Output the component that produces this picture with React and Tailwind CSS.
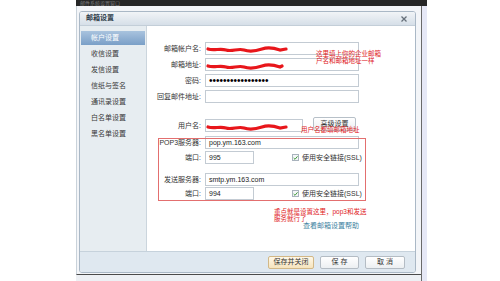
import React from 'react';

const font = { fontFamily: '"Liberation Sans", "Noto Sans CJK SC", sans-serif' };

const menu = ['帐户设置', '收信设置', '发信设置', '信纸与签名', '通讯录设置', '白名单设置', '黑名单设置'];

// red redaction scribble drawn over a field
function Scribble({ w = 80, top = 3 }) {
  return (
    <svg className="absolute left-0 pointer-events-none" style={{ top }} width={w + 4} height="8" viewBox={`0 0 ${w + 4} 8`}>
      <path
        d={`M2 4 C8 6 14 3 20 5 S32 3 38 5 S50 6 56 4 S68 3 74 5 L${w} 4`}
        stroke="#e8161b"
        strokeWidth="3.2"
        fill="none"
        strokeLinecap="round"
      />
    </svg>
  );
}

function Field({ label, w = 'w-[154px]', children, className = '' }) {
  return (
    <div className={`flex items-center ${className}`}>
      <div className="w-[55px] shrink-0 text-right text-[7px] leading-[13px] text-[#333] pr-[1px]">{label}</div>
      <div className={`relative ml-[3px] h-[13px] ${w} border border-[#c3cbd3] bg-white text-[7px] leading-[11px] text-[#222] pl-[3px]`}>
        {children}
      </div>
    </div>
  );
}

function SSL() {
  return (
    <div className="flex items-center ml-[38px]">
      <div className="w-[7px] h-[7px] border border-[#a9b3bd] bg-[#f4f6f8] flex items-center justify-center">
        <svg width="6" height="6" viewBox="0 0 6 6">
          <path d="M0.8 3 L2.4 4.6 L5.4 1" stroke="#3f9a3a" strokeWidth="1.2" fill="none" />
        </svg>
      </div>
      <span className="ml-[3px] text-[7px] leading-[9px] text-[#333]">使用安全链接(SSL)</span>
    </div>
  );
}

export default function App() {
  return (
    <div className="w-[500px] h-[281px] bg-white flex overflow-hidden" style={font}>
      <div className="ml-[76px] w-[351px] h-[281px] flex flex-col">
        {/* host window top bar */}
        <div className="h-[6px] bg-[#262626] overflow-hidden flex items-center">
          <div className="pl-[4px] text-[5px] leading-[6px] text-[#7e7e7e]">邮件系统设置窗口</div>
        </div>

        <div className="flex h-[275px]">
          <div className="w-[345px] flex flex-col">
            <div className="h-[269px] border-l border-[#c9d2da] border-b border-b-[#4a4a4a] bg-[#f3f5f8] pl-[2px] pt-[5px] pr-[5px]">
              {/* dialog */}
              <div className="w-[337px] h-[262px] border border-[#aab8c6] rounded-[3px] bg-white flex flex-col overflow-hidden">
                <div className="h-[14px] bg-gradient-to-b from-[#f1f4f7] to-[#d6dfe8] border-b border-[#c3ced8] flex items-center justify-between pl-[6px] pr-[8px]">
                  <span className="text-[7px] font-bold text-[#2d3b48]">邮箱设置</span>
                  <svg width="6" height="6" viewBox="0 0 6 6">
                    <path d="M0.5 0.5 L5.5 5.5 M5.5 0.5 L0.5 5.5" stroke="#66707a" strokeWidth="1.3" />
                  </svg>
                </div>

                <div className="flex h-[225px]">
                  {/* sidebar */}
                  <div className="w-[67px] shrink-0 bg-[#e7edf1] border-r border-[#cbd5dd] pt-[5px]">
                    {menu.map((m, i) => (
                      <div
                        key={m}
                        className={
                          i === 0
                            ? 'h-[14px] mx-[1px] mb-[1px] pl-[10px] flex items-center text-[7px] text-white bg-gradient-to-b from-[#a9c3de] to-[#7a9fc7]'
                            : 'h-[16px] pl-[11px] flex items-center text-[7px] text-[#3a3a3a]'
                        }
                      >
                        {m}
                      </div>
                    ))}
                  </div>

                  {/* main form */}
                  <div className="relative flex-1 pt-[16px]">
                    <Field label="邮箱帐户名:">
                      <Scribble w={80} top={2} />
                    </Field>
                    <Field label="邮箱地址:" className="mt-[3px]">
                      <Scribble w={76} top={3} />
                    </Field>
                    <Field label="密码:" className="mt-[3px]">
                      <span className="text-[10px] leading-[11px] text-black">•••••••••••••••••</span>
                    </Field>
                    <Field label="回复邮件地址:" className="mt-[3px]" />

                    <div className="flex items-start mt-[14px] h-[15px]">
                      <Field label="用户名:" w="w-[98px]" className="mt-[2px]">
                        <Scribble w={80} top={3} />
                      </Field>
                      <div className="ml-[10px] w-[43px] h-[14px] border border-[#b7c0c8] rounded-[2px] bg-gradient-to-b from-white to-[#eceff2] flex items-center justify-center text-[7px] text-[#333]">
                        高级设置
                      </div>
                    </div>

                    <Field label="POP3服务器:" className="mt-[4px]">pop.ym.163.com</Field>
                    <div className="flex items-center mt-[2px]">
                      <Field label="端口:" w="w-[49px]">995</Field>
                      <SSL />
                    </div>
                    <Field label="发送服务器:" className="mt-[9px]">smtp.ym.163.com</Field>
                    <div className="flex items-center mt-[1px]">
                      <Field label="端口:" w="w-[49px]">994</Field>
                      <SSL />
                    </div>

                    <div className="mt-[22px] ml-[58px] w-[154px] text-right text-[7px] leading-[8px] text-[#3d7f9e]">
                      查看邮箱设置帮助
                    </div>

                    {/* annotations */}
                    <div className="absolute left-[11px] top-[112px] w-[208px] h-[63px] border border-[#e36f6f] pointer-events-none" />
                    <div className="absolute left-[169px] top-[25px] text-[6.5px] leading-[6.5px] text-[#e0201c] whitespace-nowrap">
                      这里填上你的企业邮箱
                      <br />
                      户名和邮箱地址一样
                    </div>
                    <div className="absolute left-[154px] top-[100px] text-[6.5px] leading-[7px] text-[#e0201c] whitespace-nowrap">
                      用户名都填邮箱地址
                    </div>
                    <div className="absolute left-[127px] top-[183px] text-[6.5px] leading-[6.5px] text-[#e0201c] whitespace-nowrap">
                      重点就是设置这里，pop3和发送
                      <br />
                      服务就行了
                    </div>
                  </div>
                </div>

                {/* footer */}
                <div className="flex-1 bg-[#dfe8f0] border-t border-[#c6d2dc] flex items-center justify-end pr-[10px] gap-[6px]">
                  <div className="w-[46px] h-[13px] border border-[#d2b887] rounded-[2px] bg-gradient-to-b from-[#fff8e8] to-[#f6e4bd] flex items-center justify-center text-[7px] text-[#333]">
                    保存并关闭
                  </div>
                  <div className="w-[39px] h-[13px] border border-[#b4bcc4] rounded-[2px] bg-gradient-to-b from-white to-[#eceff2] flex items-center justify-center text-[7px] text-[#333]">
                    保&nbsp;存
                  </div>
                  <div className="w-[40px] h-[13px] border border-[#b4bcc4] rounded-[2px] bg-gradient-to-b from-white to-[#eceff2] flex items-center justify-center text-[7px] text-[#333]">
                    取&nbsp;消
                  </div>
                </div>
              </div>
            </div>
            <div className="flex-1 bg-[#edf0f4]" />
          </div>
          <div className="w-[1px] bg-[#6a6a6a]" />
          <div className="w-[5px] bg-[#e6e8f6]" />
        </div>
      </div>
    </div>
  );
}
